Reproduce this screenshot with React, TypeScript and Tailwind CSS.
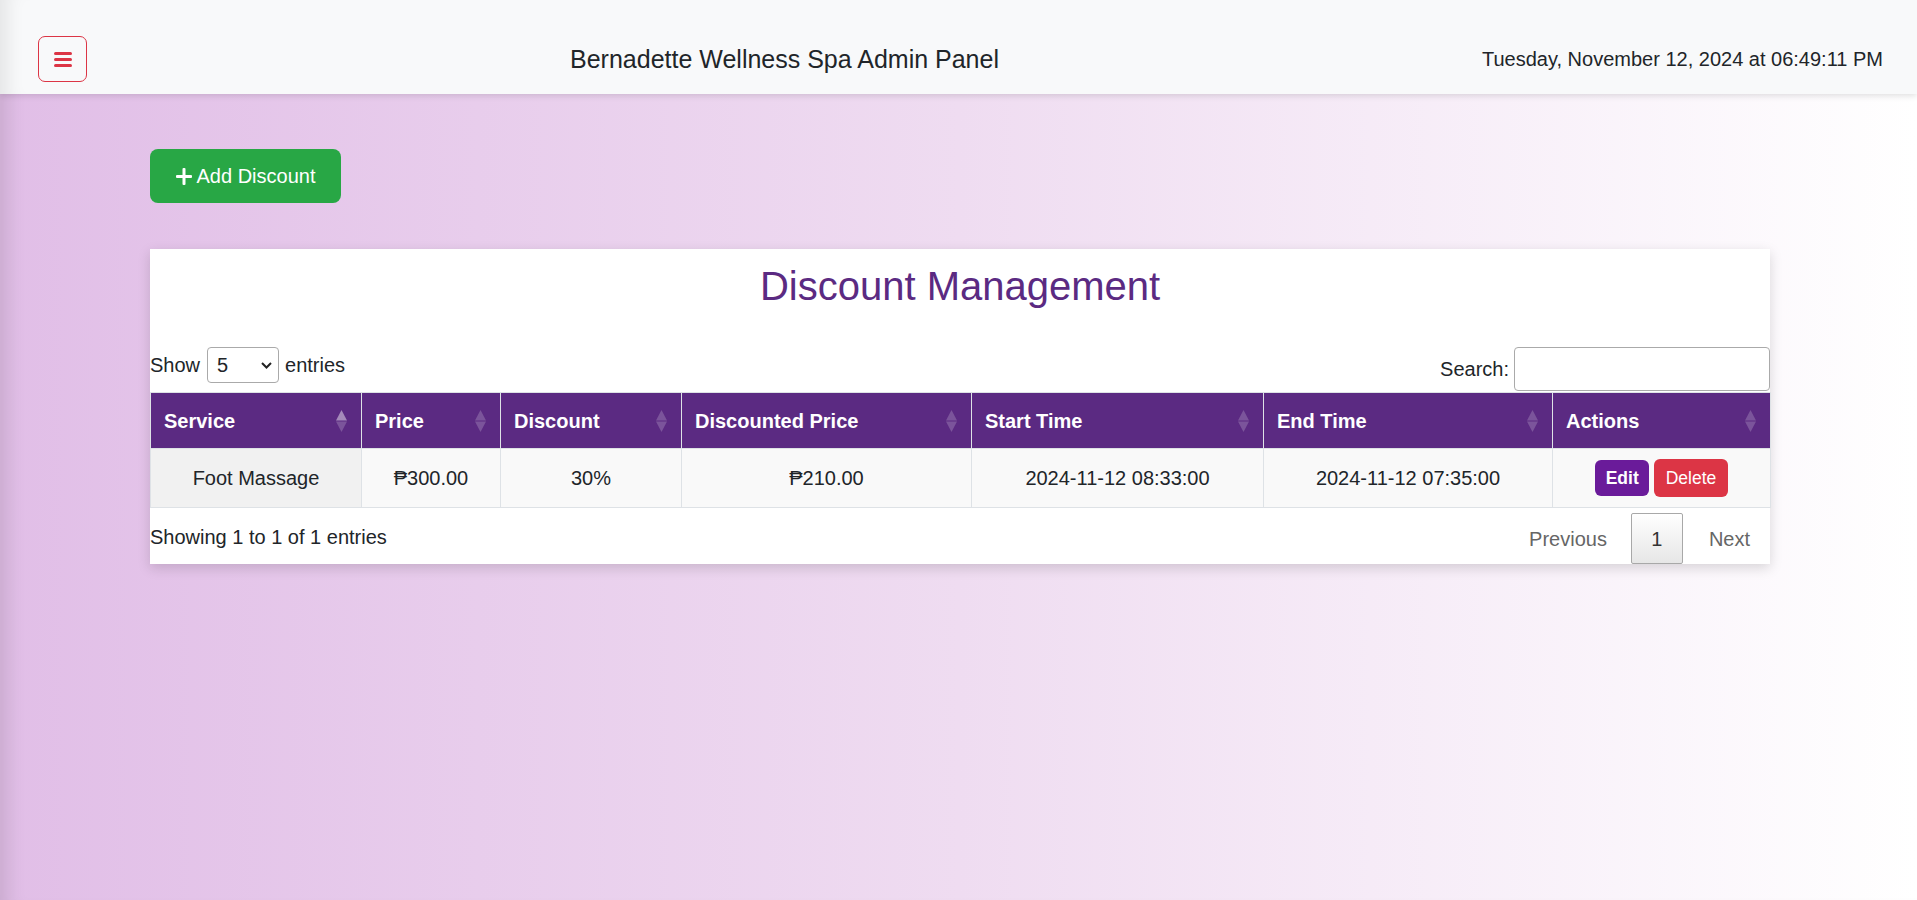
import React from "react";

function SortIcon({ active }: { active?: boolean }) {
  return (
    <svg width="11" height="22" viewBox="0 0 11 22" className="shrink-0">
      <polygon points="5.5,0 11,10.5 0,10.5" fill="#ffffff" fillOpacity={active ? 0.45 : 0.2} />
      <polygon points="0,11.5 11,11.5 5.5,22" fill="#ffffff" fillOpacity={0.2} />
    </svg>
  );
}

function BarsIcon() {
  return (
    <svg width="18" height="15" viewBox="0 0 18 15">
      <rect x="0" y="0" width="18" height="3" rx="1.5" fill="#dc3545" />
      <rect x="0" y="6" width="18" height="3" rx="1.5" fill="#dc3545" />
      <rect x="0" y="12" width="18" height="3" rx="1.5" fill="#dc3545" />
    </svg>
  );
}

function PlusIcon() {
  return (
    <svg width="16" height="17" viewBox="0 0 16 17">
      <rect x="6.5" y="0" width="3" height="17" rx="1" fill="#ffffff" />
      <rect x="0" y="7" width="16" height="3" rx="1" fill="#ffffff" />
    </svg>
  );
}

const headers = [
  { label: "Service", active: true },
  { label: "Price" },
  { label: "Discount" },
  { label: "Discounted Price" },
  { label: "Start Time" },
  { label: "End Time" },
  { label: "Actions" },
];

export default function App() {
  return (
    <div className="min-h-screen w-full bg-linear-to-r from-[#e1bee7] via-[#efdcf1] to-[#ffffff] font-['Liberation_Sans',Arial,sans-serif] text-[#212529] shadow-[inset_22px_0_18px_-14px_rgba(0,0,0,0.10)]">
      <header className="relative z-10 flex h-[94px] items-center justify-between bg-[#f8f9fa] pl-[38px] pr-[34px] pt-[24px] shadow-[inset_22px_0_18px_-14px_rgba(0,0,0,0.08),0_2px_6px_rgba(0,0,0,0.12)]">
        <button className="flex h-[46px] w-[49px] items-center justify-center rounded-[7px] border border-[#dc3545] bg-transparent">
          <BarsIcon />
        </button>
        <h4 className="text-[25px] leading-[30px] text-[#212529]">Bernadette Wellness Spa Admin Panel</h4>
        <div className="text-[20px] leading-[30px] text-[#212529]">Tuesday, November 12, 2024 at 06:49:11 PM</div>
      </header>

      <main className="ml-[150px] w-[1620px] pt-[55px] pb-[40px]">
        <button className="flex h-[54px] w-[191px] items-center justify-center gap-[5px] rounded-[8px] bg-[#28a745] text-[20px] text-white">
          <PlusIcon />
          <span>Add Discount</span>
        </button>

        <div className="mt-[46px] bg-white shadow-[0_4px_12px_rgba(0,0,0,0.15)]">
          <h2 className="pt-[13px] text-center text-[40px] leading-[48px] text-[#5b2a82]">Discount Management</h2>

          <div className="mt-[37px] flex h-[45px] items-start justify-between text-[20px]">
            <div className="flex h-[36px] items-center">
              <span>Show</span>
              <div className="ml-[7px] mr-[6px] flex h-[36px] w-[72px] items-center justify-between rounded-[4px] border border-[#aaaaaa] pl-[9px] pr-[6px]">
                <span>5</span>
                <svg width="11" height="7" viewBox="0 0 11 7">
                  <path d="M1 1 L5.5 5.5 L10 1" fill="none" stroke="#222" strokeWidth="2" />
                </svg>
              </div>
              <span>entries</span>
            </div>
            <div className="flex h-[44px] items-center gap-[5px]">
              <span>Search:</span>
              <div className="h-[44px] w-[256px] rounded-[4px] border border-[#aaaaaa] bg-white" />
            </div>
          </div>

          <table className="w-full table-fixed border-collapse text-[20px]">
            <colgroup>
              <col className="w-[211px]" />
              <col className="w-[139px]" />
              <col className="w-[181px]" />
              <col className="w-[290px]" />
              <col className="w-[292px]" />
              <col className="w-[289px]" />
              <col className="w-[218px]" />
            </colgroup>
            <thead>
              <tr className="bg-[#5b2a82]">
                {headers.map((h) => (
                  <th key={h.label} className="h-[56px] border border-[#dee2e6] pl-[13px] pr-[14px] text-left font-bold text-white">
                    <div className="flex items-center justify-between">
                      <span>{h.label}</span>
                      <SortIcon active={h.active} />
                    </div>
                  </th>
                ))}
              </tr>
            </thead>
            <tbody>
              <tr className="bg-[#f9f9f9] text-center">
                <td className="h-[59px] border border-[#dee2e6] bg-[#f1f1f1]">Foot Massage</td>
                <td className="border border-[#dee2e6]">₱300.00</td>
                <td className="border border-[#dee2e6]">30%</td>
                <td className="border border-[#dee2e6]">₱210.00</td>
                <td className="border border-[#dee2e6]">2024-11-12 08:33:00</td>
                <td className="border border-[#dee2e6]">2024-11-12 07:35:00</td>
                <td className="border border-[#dee2e6]">
                  <div className="flex items-center justify-center gap-[5px]">
                    <button className="h-[36px] rounded-[6px] bg-[#6a1b9a] px-[10.5px] text-[17.5px] font-bold text-white">Edit</button>
                    <button className="h-[38px] rounded-[6px] bg-[#dc3545] px-[11.5px] text-[17.5px] text-white">Delete</button>
                  </div>
                </td>
              </tr>
            </tbody>
          </table>

          <div className="flex items-center justify-between pt-[5px] text-[20px]">
            <div className="pb-[3px]">Showing 1 to 1 of 1 entries</div>
            <div className="flex items-center">
              <div className="flex h-[51px] items-center px-[20px] text-[#666666]">Previous</div>
              <div className="ml-[4px] flex h-[51px] w-[52px] items-center justify-center rounded-[2px] border border-[#a8a8a8] bg-linear-to-b from-[#ffffff] to-[#e6e6e6] text-[#333333]">1</div>
              <div className="ml-[6px] flex h-[51px] items-center px-[20px] text-[#666666]">Next</div>
            </div>
          </div>
        </div>
      </main>
    </div>
  );
}
